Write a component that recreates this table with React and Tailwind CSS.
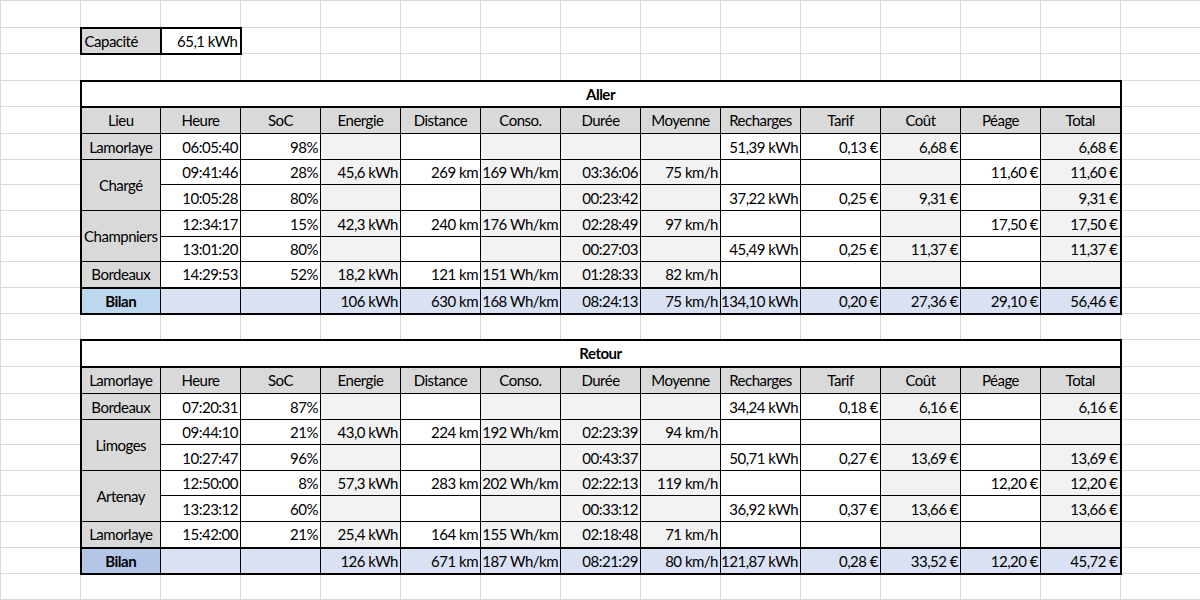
import React from "react";

const ROW_H = [
  "h-[27px]", "h-[26px]", "h-[27px]", "h-[26px]", "h-[27px]", "h-[26px]", "h-[25px]", "h-[26px]",
  "h-[26px]", "h-[25px]", "h-[26px]", "h-[26px]", "h-[26px]", "h-[27px]", "h-[27px]", "h-[26px]",
  "h-[25px]", "h-[26px]", "h-[25px]", "h-[26px]", "h-[26px]", "h-[26px]", "h-[26px]",
];

const BG = [
  "bg-[#d9d9d9]", "bg-white", "bg-white", "bg-[#f2f2f2]", "bg-white", "bg-[#f2f2f2]",
  "bg-[#f2f2f2]", "bg-[#f2f2f2]", "bg-white", "bg-white", "bg-[#f2f2f2]", "bg-white", "bg-[#f2f2f2]",
];

const HEAD = ["Lieu", "Heure", "SoC", "Energie", "Distance", "Conso.", "Durée", "Moyenne", "Recharges", "Tarif", "Coût", "Péage", "Total"];

const aller = {
  title: "Aller",
  first: "Lieu",
  bilanBg: "bg-[#bdd7ee]",
  rows: [
    { lieu: "Lamorlaye", span: 1, v: ["06:05:40", "98%", "", "", "", "", "", "51,39 kWh", "0,13 €", "6,68 €", "", "6,68 €"] },
    { lieu: "Chargé", span: 2, v: ["09:41:46", "28%", "45,6 kWh", "269 km", "169 Wh/km", "03:36:06", "75 km/h", "", "", "", "11,60 €", "11,60 €"] },
    { lieu: null, v: ["10:05:28", "80%", "", "", "", "00:23:42", "", "37,22 kWh", "0,25 €", "9,31 €", "", "9,31 €"] },
    { lieu: "Champniers", span: 2, v: ["12:34:17", "15%", "42,3 kWh", "240 km", "176 Wh/km", "02:28:49", "97 km/h", "", "", "", "17,50 €", "17,50 €"] },
    { lieu: null, v: ["13:01:20", "80%", "", "", "", "00:27:03", "", "45,49 kWh", "0,25 €", "11,37 €", "", "11,37 €"] },
    { lieu: "Bordeaux", span: 1, v: ["14:29:53", "52%", "18,2 kWh", "121 km", "151 Wh/km", "01:28:33", "82 km/h", "", "", "", "", ""] },
  ],
  bilan: ["", "", "106 kWh", "630 km", "168 Wh/km", "08:24:13", "75 km/h", "134,10 kWh", "0,20 €", "27,36 €", "29,10 €", "56,46 €"],
};

const retour = {
  title: "Retour",
  first: "Lamorlaye",
  bilanBg: "bg-[#b4c6e7]",
  rows: [
    { lieu: "Bordeaux", span: 1, v: ["07:20:31", "87%", "", "", "", "", "", "34,24 kWh", "0,18 €", "6,16 €", "", "6,16 €"] },
    { lieu: "Limoges", span: 2, v: ["09:44:10", "21%", "43,0 kWh", "224 km", "192 Wh/km", "02:23:39", "94 km/h", "", "", "", "", ""] },
    { lieu: null, v: ["10:27:47", "96%", "", "", "", "00:43:37", "", "50,71 kWh", "0,27 €", "13,69 €", "", "13,69 €"] },
    { lieu: "Artenay", span: 2, v: ["12:50:00", "8%", "57,3 kWh", "283 km", "202 Wh/km", "02:22:13", "119 km/h", "", "", "", "12,20 €", "12,20 €"] },
    { lieu: null, v: ["13:23:12", "60%", "", "", "", "00:33:12", "", "36,92 kWh", "0,37 €", "13,66 €", "", "13,66 €"] },
    { lieu: "Lamorlaye", span: 1, v: ["15:42:00", "21%", "25,4 kWh", "164 km", "155 Wh/km", "02:18:48", "71 km/h", "", "", "", "", ""] },
  ],
  bilan: ["", "", "126 kWh", "671 km", "187 Wh/km", "08:21:29", "80 km/h", "121,87 kWh", "0,28 €", "33,52 €", "12,20 €", "45,72 €"],
};

const FILL = "border border-[#d9d9d9] bg-white p-0";
const TD = "border border-black p-0 whitespace-nowrap overflow-hidden";

function fillers(n, prefix) {
  return Array.from({ length: n }, (_, i) => <td key={prefix + i} className={FILL}></td>);
}

function edge(c) {
  if (c === 0) return " border-l-2";
  if (c === 12) return " border-r-2";
  return "";
}

function tableRows(t) {
  const out = [];
  out.push([
    <td key="f" className={FILL}></td>,
    <td key="t" colSpan={13} className="border-2 border-black bg-white p-0 text-center font-bold">{t.title}</td>,
    <td key="g" className={FILL}></td>,
  ]);
  out.push([
    <td key="f" className={FILL}></td>,
    ...[t.first, ...HEAD.slice(1)].map((h, c) => (
      <td key={"h" + c} className={TD + " bg-[#d9d9d9] text-center" + edge(c)}>{h}</td>
    )),
    <td key="g" className={FILL}></td>,
  ]);
  t.rows.forEach((r) => {
    const cells = [<td key="f" className={FILL}></td>];
    if (r.lieu) {
      cells.push(
        <td key="l" rowSpan={r.span} className={TD + " bg-[#d9d9d9] text-center border-l-2"}>{r.lieu}</td>
      );
    }
    r.v.forEach((val, i) => {
      const c = i + 1;
      cells.push(
        <td key={"d" + c} className={TD + " " + BG[c] + " text-right pr-[2px]" + edge(c)}>{val}</td>
      );
    });
    cells.push(<td key="g" className={FILL}></td>);
    out.push(cells);
  });
  out.push([
    <td key="f" className={FILL}></td>,
    <td key="b" className={TD + " " + t.bilanBg + " text-center font-bold border-l-2 border-t-2 border-b-2"}>Bilan</td>,
    ...t.bilan.map((val, i) => {
      const c = i + 1;
      return (
        <td key={"b" + c} className={TD + " bg-[#d9e1f2] text-right pr-[2px] border-t-2 border-b-2" + edge(c)}>{val}</td>
      );
    }),
    <td key="g" className={FILL}></td>,
  ]);
  return out;
}

export default function App() {
  const rows = [];
  rows.push(fillers(15, "a"));
  rows.push([
    <td key="f" className={FILL}></td>,
    <td key="c" className="border-2 border-black bg-[#d9d9d9] p-0 pl-[3px] text-left whitespace-nowrap">Capacité</td>,
    <td key="v" className="border-2 border-black bg-white p-0 pr-[2px] text-right whitespace-nowrap">65,1 kWh</td>,
    ...fillers(12, "b"),
  ]);
  rows.push(fillers(15, "c"));
  rows.push(...tableRows(aller));
  rows.push(fillers(15, "d"));
  rows.push(...tableRows(retour));
  rows.push(fillers(15, "e"));

  return (
    <div className="w-[1200px] h-[600px] overflow-hidden bg-white font-['Lato',sans-serif] text-[15px] tracking-[-0.5px] leading-[18px] text-black">
      <table className="w-[1200px] table-fixed border-collapse">
        <colgroup>
          {Array.from({ length: 15 }, (_, i) => (
            <col key={i} className="w-[80px]" />
          ))}
        </colgroup>
        <tbody>
          {rows.map((cells, i) => (
            <tr key={i} className={ROW_H[i]}>
              {cells}
            </tr>
          ))}
        </tbody>
      </table>
    </div>
  );
}
